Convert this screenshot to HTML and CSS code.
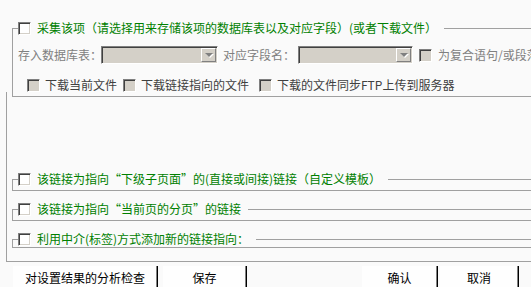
FILE: index.html
```html
<!DOCTYPE html>
<html lang="zh-CN">
<head>
    <meta charset="UTF-8">
    <title>采集规则设置</title>
    <link rel="stylesheet" href="styles.css">
</head>
<body>
    <fieldset class="group group-main">
        <legend class="group-title"><span class="check"></span>采集该项（请选择用来存储该项的数据库表以及对应字段）(或者下载文件）</legend>
        <div class="store-row">
            <span class="label label-table">存入数据库表：</span>
            <div class="select select-table"><div class="drop"><i></i></div></div>
            <span class="label label-field">对应字段名：</span>
            <div class="select select-field"><div class="drop"><i></i></div></div>
            <span class="check check-off"></span>
            <span class="label label-compound">为复合语句/或段落的内容</span>
        </div>
        <div class="file-row">
            <span class="opt"><span class="check check-off"></span>下载当前文件</span>
            <span class="opt"><span class="check check-off"></span>下载链接指向的文件</span>
            <span class="opt"><span class="check check-off"></span>下载的文件同步FTP上传到服务器</span>
        </div>
    </fieldset>

    <div class="outer">
        <fieldset class="group group-link">
            <legend class="group-title"><span class="check"></span>该链接为指向“下级子页面”的(直接或间接)链接（自定义模板）</legend>
        </fieldset>
        <fieldset class="group group-link">
            <legend class="group-title"><span class="check"></span>该链接为指向“当前页的分页”的链接</legend>
        </fieldset>
        <fieldset class="group group-link group-last">
            <legend class="group-title"><span class="check"></span>利用中介(标签)方式添加新的链接指向：</legend>
        </fieldset>
    </div>

    <div class="buttons">
        <div class="btn btn-check">对设置结果的分析检查</div>
        <div class="btn btn-save">保存</div>
        <div class="btn btn-ok">确认</div>
        <div class="btn btn-cancel">取消</div>
    </div>
</body>
</html>
```

FILE: styles.css
```css
html, body {
    margin: 0;
    height: 287px;
    overflow: hidden;
}

body {
    width: 531px;
    background-color: #fafafa;
    font-family: "Noto Sans CJK SC", "Liberation Sans", sans-serif;
    font-size: 12px;
    line-height: 14px;
    color: #000;
}

.group {
    margin: 0;
    padding: 0 0 0 5px;
    border: 1px solid #a0a0a0;
    border-right: none;
    width: 600px;
    box-sizing: border-box;
}

.group-title {
    display: flex;
    align-items: center;
    padding: 0 7px 0 0;
    height: 14px;
    color: #008000;
    white-space: nowrap;
}

.group-main {
    margin: 21px 0 0 12px;
    padding-bottom: 4px;
}

.check {
    display: inline-block;
    width: 13px;
    height: 13px;
    box-sizing: border-box;
    background-color: #fff;
    border-top: 1px solid #808080;
    border-left: 1px solid #808080;
    border-bottom: 1px solid #fff;
    border-right: 1px solid #fff;
    box-shadow: inset 1px 1px 0 #404040, inset -1px -1px 0 #d4d0c8;
    flex: none;
}

.group-title .check {
    margin-right: 6px;
}

.check-off {
    background-color: #d4d0c8;
}

.store-row {
    display: flex;
    align-items: center;
    height: 18px;
    margin-top: 11px;
    white-space: nowrap;
}

.label {
    color: #808080;
}

.label-table {
    width: 83px;
}

.label-field {
    margin-left: 5px;
    width: 75px;
}

.label-compound {
    margin-left: 6px;
}

.select {
    display: flex;
    justify-content: flex-end;
    align-items: center;
    height: 18px;
    box-sizing: border-box;
    padding: 1px;
    background-color: #d4d0c8;
    border-top: 1px solid #808080;
    border-left: 1px solid #808080;
    border-bottom: 1px solid #fff;
    border-right: 1px solid #fff;
    box-shadow: inset 1px 1px 0 #404040;
}

.select-table {
    width: 117px;
}

.select-field {
    width: 115px;
    margin-right: 6px;
}

.drop {
    width: 15px;
    height: 14px;
    box-sizing: border-box;
    background-color: #d4d0c8;
    border: 1px solid #fff;
    border-right-color: #808080;
    border-bottom-color: #808080;
    display: flex;
    justify-content: center;
    align-items: center;
}

.drop i {
    width: 0;
    height: 0;
    border-left: 4px solid transparent;
    border-right: 4px solid transparent;
    border-top: 4px solid #808080;
    filter: drop-shadow(1px 1px 0 #fff);
}

.file-row {
    display: flex;
    align-items: center;
    height: 14px;
    margin-top: 14px;
    padding-left: 9px;
    white-space: nowrap;
    color: #404040;
}

.opt {
    display: flex;
    align-items: center;
}

.opt .check {
    margin-right: 5px;
}

.opt:nth-child(1) {
    width: 96px;
}

.opt:nth-child(2) {
    width: 136px;
}

.outer {
    margin: -5px 0 0 6px;
    padding: 80px 0 13px 5px;
    border-left: 1px solid #a0a0a0;
    border-bottom: 1px solid #a0a0a0;
}

.group-link {
    margin-top: 11px;
    padding-bottom: 4px;
}

.group-link:first-child {
    margin-top: 0;
}

.group-last {
    padding-bottom: 1px;
}

.buttons {
    display: flex;
    margin-top: 4px;
    padding-left: 13px;
}

.btn {
    height: 24px;
    line-height: 24px;
    text-align: center;
    background-color: #fefefe;
    border-right: 1px solid #000;
    box-shadow: inset -1px 0 0 #808080;
    box-sizing: border-box;
}

.btn-check {
    width: 145px;
}

.btn-save {
    width: 84px;
    margin-left: 5px;
}

.btn-ok {
    width: 76px;
    margin-left: 115px;
}

.btn-cancel {
    width: 79px;
    margin-left: 2px;
}
```
